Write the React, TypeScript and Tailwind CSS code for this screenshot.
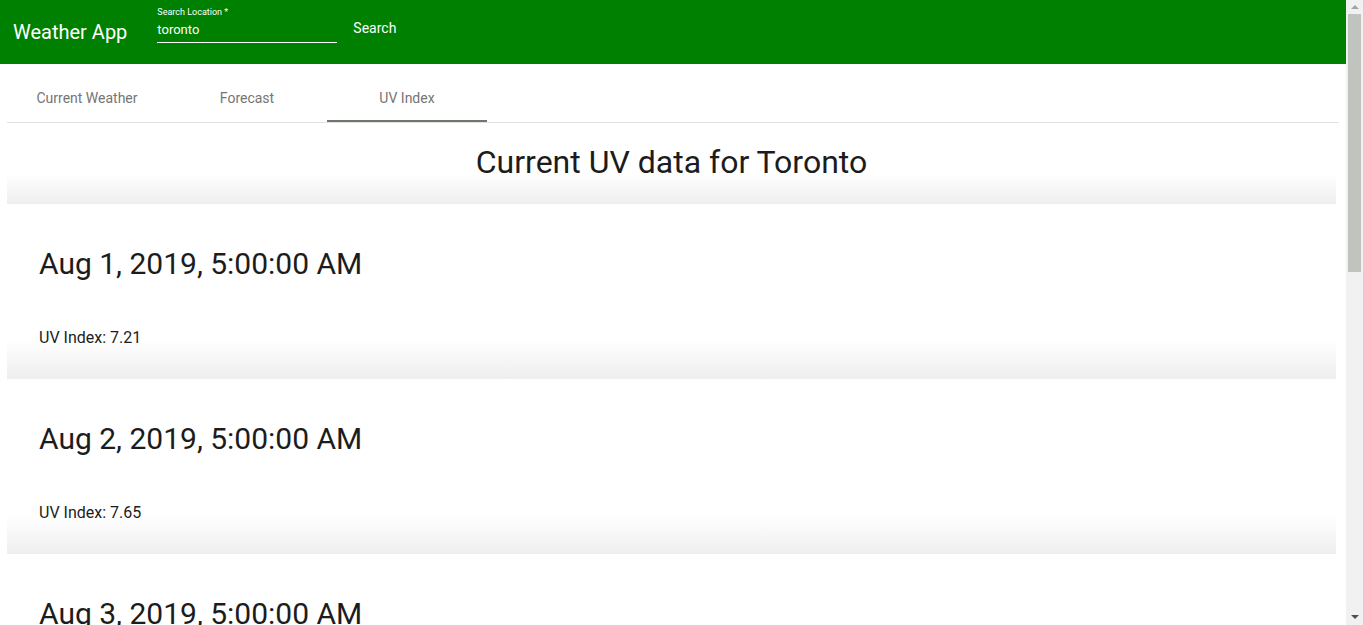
import React from "react"

const uvData = [
    { date: "Aug 1, 2019, 5:00:00 AM", value: "7.21" },
    { date: "Aug 2, 2019, 5:00:00 AM", value: "7.65" },
    { date: "Aug 3, 2019, 5:00:00 AM", value: "7.02" },
]

const tabs = ["Current Weather", "Forecast", "UV Index"]

const Header = () => (
    <div className="h-16 shrink-0 bg-[#008000] flex items-center pl-[13px] text-white">
        <span className="text-[20px] leading-none">Weather App</span>
        <div className="ml-[30px] w-[180px] flex flex-col">
            <span className="text-[9px] leading-none -mt-[14px] mb-[6px]">Search Location *</span>
            <span className="text-[13px] leading-none pb-[6px] border-b border-white">toronto</span>
        </div>
        <button className="ml-4 text-[14px] leading-none -mt-[8px]">Search</button>
    </div>
)

const Tabs = () => (
    <div className="mx-[7px] mt-[10px] flex border-b border-[#dfe4dc]">
        {tabs.map((t, i) => (
            <div key={t} className={"w-[160px] h-[48px] flex items-center justify-center text-[14px] text-[#757575] " + (i == 2 ? "border-b-2 border-[#6f7570] -mb-px pt-[2px]" : "")}>
                {t}
            </div>
        ))}
    </div>
)

const UvCard = ({ date, value }: { date: string; value: string }) => (
    <div className="h-[175px] shrink-0 px-8 flex flex-col bg-[linear-gradient(to_bottom,#ffffff_136px,#f9f9f9_150px,#eeeeee)]">
        <h2 className="text-[30px] leading-none mt-[45px] text-[#1c1c1c]">{date}</h2>
        <p className="text-[16px] leading-none mt-[51px] text-[#1c1c1c]">UV Index: {value}</p>
    </div>
)

const Scrollbar = () => (
    <div className="w-[17px] shrink-0 bg-[#f1f1f1] flex flex-col items-center">
        <div className="h-[14px] flex items-center justify-center">
            <div className="w-0 h-0 border-l-[4px] border-r-[4px] border-b-[4px] border-l-transparent border-r-transparent border-b-[#a3a3a3]" />
        </div>
        <div className="w-[13px] h-[258px] bg-[#c1c3bf]" />
        <div className="flex-1" />
        <div className="h-[17px] flex items-center justify-center">
            <div className="w-0 h-0 border-l-[4px] border-r-[4px] border-t-[4px] border-l-transparent border-r-transparent border-t-[#505050]" />
        </div>
    </div>
)

export default function App() {
    return (
        <div className="h-[625px] w-[1363px] flex overflow-hidden bg-white" style={{ fontFamily: "Roboto, 'Liberation Sans', sans-serif" }}>
            <div className="w-[1346px] flex flex-col">
                <Header />
                <Tabs />
                <div className="ml-[7px] mr-[10px] flex flex-col">
                    <div className="h-[81px] shrink-0 flex items-center justify-center pb-[3px] bg-[linear-gradient(to_bottom,#ffffff_50px,#f9f9f9_62px,#eeeeee)]">
                        <h1 className="text-[32px] leading-none text-[#1c1c1c]">Current UV data for Toronto</h1>
                    </div>
                    {uvData.map((d) => (
                        <UvCard key={d.date} date={d.date} value={d.value} />
                    ))}
                </div>
            </div>
            <Scrollbar />
        </div>
    )
}
